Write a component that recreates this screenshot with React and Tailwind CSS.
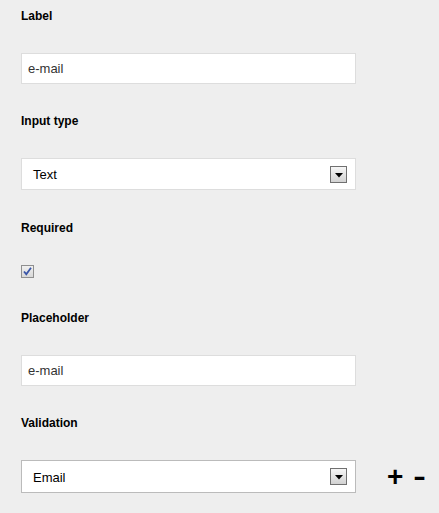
function FieldLabel({ children, className = '' }) {
  return (
    <div className={`text-[12px] font-bold leading-[14px] text-black ${className}`}>
      {children}
    </div>
  );
}

function TextBox({ value, className = '' }) {
  return (
    <div
      className={`flex h-[31px] w-[335px] items-center border border-[#dddddd] bg-white pl-[6px] text-[13px] text-[#333333] ${className}`}
    >
      {value}
    </div>
  );
}

function DropArrow() {
  return (
    <div className="flex h-[17px] w-[17px] items-center justify-center border border-[#707070] bg-gradient-to-b from-[#f6f6f6] to-[#d2d2d2]">
      <svg width="8" height="5" viewBox="0 0 8 5" className="mt-[2px]">
        <path d="M0 0h8L4 4.5z" fill="#000" />
      </svg>
    </div>
  );
}

function SelectBox({ value, border = 'border-[#dddddd]', className = '' }) {
  return (
    <div
      className={`flex h-[32px] w-[335px] items-center justify-between border ${border} bg-white pl-[11px] pr-[8px] text-[13px] text-black ${className}`}
    >
      <span className="pt-[2px]">{value}</span>
      <DropArrow />
    </div>
  );
}

function CheckBox() {
  return (
    <div className="flex h-[13px] w-[13px] items-center justify-center border border-[#8f8f8f] bg-gradient-to-b from-[#f0f0f0] to-[#d8d8d8]">
      <svg width="9" height="9" viewBox="0 0 9 9">
        <path
          d="M1 4.5l2.3 2.7L8 0.8"
          fill="none"
          stroke="#3a56a8"
          strokeWidth="1.8"
        />
      </svg>
    </div>
  );
}

export default function App() {
  return (
    <div
      className="h-[513px] w-[439px] bg-[#eeeeee] pl-[21px] pt-[9px]"
      style={{ fontFamily: '"Liberation Sans", Arial, sans-serif' }}
    >
      <FieldLabel>Label</FieldLabel>
      <TextBox value="e-mail" className="mt-[30px]" />

      <FieldLabel className="mt-[30px]">Input type</FieldLabel>
      <SelectBox value="Text" className="mt-[30px]" />

      <FieldLabel className="mt-[31px]">Required</FieldLabel>
      <div className="mt-[30px]">
        <CheckBox />
      </div>

      <FieldLabel className="mt-[33px]">Placeholder</FieldLabel>
      <TextBox value="e-mail" className="mt-[30px]" />

      <FieldLabel className="mt-[30px]">Validation</FieldLabel>
      <div className="mt-[30px] flex items-center">
        <SelectBox value="Email" border="border-[#bbbbbb]" className="h-[33px]" />
        <div className="ml-[31px] flex items-center gap-[12px] text-[28px] font-bold leading-none text-black">
          <span>+</span>
          <span className="inline-block scale-x-[1.35]">-</span>
        </div>
      </div>
    </div>
  );
}
